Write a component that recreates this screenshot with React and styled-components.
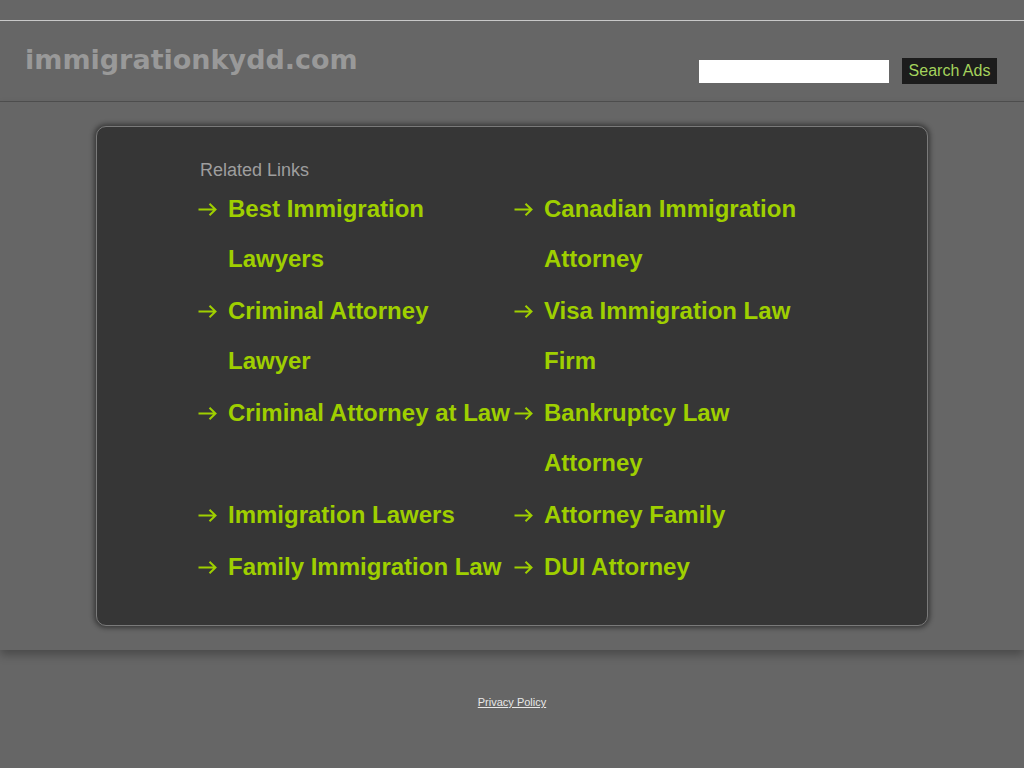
import React from 'react'
import styled, { createGlobalStyle } from 'styled-components'

const GlobalStyle = createGlobalStyle`
  html, body {
    margin: 0;
    padding: 0;
    background: #666666;
  }
  body {
    font-family: "Liberation Sans", Arial, sans-serif;
  }
`

const Page = styled.div`
  width: 1024px;
  min-height: 768px;
  background: #666666;
  padding-top: 20px;
  box-sizing: border-box;
`

const Header = styled.header`
  height: 80px;
  border-top: 1px solid #c8c8c8;
  border-bottom: 1px solid #505050;
  display: flex;
  align-items: flex-start;
  justify-content: space-between;
  padding: 0 27px 0 25px;
`

const Domain = styled.h1`
  margin: 0;
  padding-top: 21px;
  font-family: "DejaVu Sans", Verdana, sans-serif;
  font-weight: bold;
  font-size: 27px;
  line-height: 36px;
  color: #999999;
`

const SearchForm = styled.form`
  display: flex;
  align-items: center;
  gap: 13px;
  margin-top: 37px;
`

const SearchInput = styled.input`
  width: 190px;
  height: 23px;
  border: 0;
  padding: 0;
  margin: 0;
  background: #ffffff;
  box-sizing: border-box;
`

const SearchButton = styled.button`
  height: 26px;
  width: 95px;
  border: 0;
  padding: 0;
  background: #1c1c1c;
  color: #a4d35c;
  font-family: "Liberation Sans", Arial, sans-serif;
  font-size: 16px;
  cursor: pointer;
`

const Main = styled.main`
  position: relative;
  z-index: 1;
  padding: 24px 0;
  box-shadow: 0 5px 9px rgba(0, 0, 0, 0.28);
  display: flex;
  justify-content: center;
`

const Panel = styled.section`
  width: 832px;
  box-sizing: border-box;
  background: #363636;
  border: 1px solid #7a7a7a;
  border-radius: 10px;
  box-shadow: 0 0 5px 2px rgba(0, 0, 0, 0.45);
  padding: 33px 0 33px 101px;
`

const Heading = styled.h2`
  margin: 0 0 4px 2px;
  font-weight: normal;
  font-size: 18px;
  line-height: 20px;
  color: #9e9e9e;
`

const LinkGrid = styled.ul`
  list-style: none;
  margin: 0;
  padding: 0;
  display: grid;
  grid-template-columns: 316px 316px;
  row-gap: 2px;
`

const Item = styled.li`
  display: flex;
  align-items: flex-start;
`

const ArrowBox = styled.span`
  flex: 0 0 19px;
  height: 50px;
  margin-right: 11px;
  display: flex;
  align-items: center;
`

const LinkText = styled.a`
  font-weight: bold;
  font-size: 24px;
  line-height: 50px;
  color: #9fcf00;
  text-decoration: none;
  white-space: nowrap;
`

const Footer = styled.footer`
  padding-top: 42px;
  text-align: center;
`

const FooterLink = styled.a`
  font-size: 11px;
  color: #e8e8e8;
  text-decoration: underline;
`

const Arrow = () => (
  <svg width="19" height="13" viewBox="0 0 19 13">
    <path
      d="M0.5 6.5 H17.5 M11.5 0.7 L17.5 6.5 L11.5 12.3"
      fill="none"
      stroke="#9fcf00"
      strokeWidth="2"
    />
  </svg>
)

const links = [
  ['Best Immigration', 'Lawyers'],
  ['Canadian Immigration', 'Attorney'],
  ['Criminal Attorney', 'Lawyer'],
  ['Visa Immigration Law', 'Firm'],
  ['Criminal Attorney at Law'],
  ['Bankruptcy Law', 'Attorney'],
  ['Immigration Lawers'],
  ['Attorney Family'],
  ['Family Immigration Law'],
  ['DUI Attorney'],
]

export default function App() {
  return (
    <>
      <GlobalStyle />
      <Page>
        <Header>
          <Domain>immigrationkydd.com</Domain>
          <SearchForm onSubmit={e => e.preventDefault()}>
            <SearchInput type="text" />
            <SearchButton type="submit">Search Ads</SearchButton>
          </SearchForm>
        </Header>
        <Main>
          <Panel>
            <Heading>Related Links</Heading>
            <LinkGrid>
              {links.map(lines => (
                <Item key={lines.join(' ')}>
                  <ArrowBox>
                    <Arrow />
                  </ArrowBox>
                  <LinkText href="#">
                    {lines.map((l, i) => (
                      <React.Fragment key={l}>
                        {i > 0 && <br />}
                        {l}
                      </React.Fragment>
                    ))}
                  </LinkText>
                </Item>
              ))}
            </LinkGrid>
          </Panel>
        </Main>
        <Footer>
          <FooterLink href="#">Privacy Policy</FooterLink>
        </Footer>
      </Page>
    </>
  )
}
